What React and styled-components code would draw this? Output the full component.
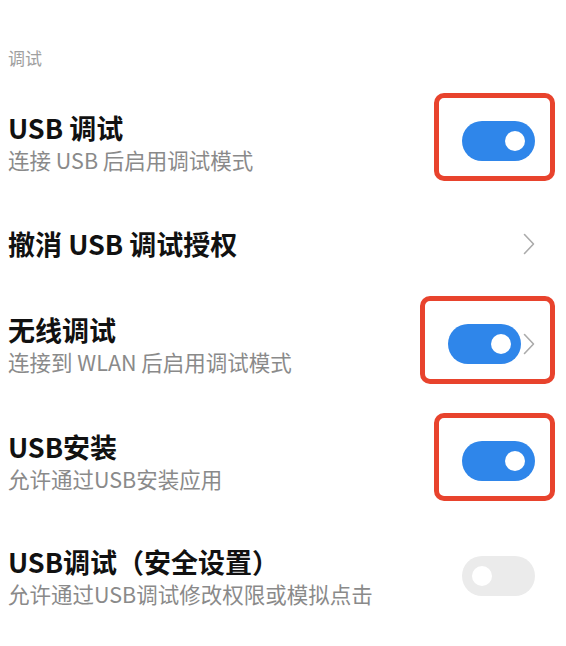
import React from 'react';
import styled, { createGlobalStyle } from 'styled-components';

const GlobalStyle = createGlobalStyle`
  html, body {
    margin: 0;
    padding: 0;
    background: #fff;
  }
  body {
    font-family: "Noto Sans CJK SC", "Noto Sans", sans-serif;
    -webkit-font-smoothing: antialiased;
  }
`;

const Page = styled.div`
  width: 566px;
  height: 646px;
  box-sizing: border-box;
  padding: 46px 31px 0 8px;
  background: #fff;
  overflow: hidden;
`;

const SectionTitle = styled.div`
  font-size: 17px;
  line-height: 24px;
  color: #a0a0a0;
  margin-bottom: 20px;
`;

const Row = styled.div`
  display: flex;
  align-items: center;
  justify-content: space-between;
  height: ${(p) => p.$h}px;
`;

const Texts = styled.div`
  display: flex;
  flex-direction: column;
  padding-top: ${(p) => p.$shift || 0}px;
`;

const Title = styled.div`
  font-size: 27px;
  font-weight: 700;
  line-height: 34px;
  color: #111;
`;

const Sub = styled.div`
  font-size: 21.5px;
  line-height: 30px;
  color: #8a8a8a;
`;

const Controls = styled.div`
  position: relative;
  display: flex;
  align-items: center;
  gap: 2px;
`;

const Highlight = styled.div`
  position: absolute;
  top: -28px;
  bottom: -20px;
  left: -28px;
  right: -20px;
  border: 5px solid #e8432d;
  border-radius: 10px;
  pointer-events: none;
`;

const Track = styled.div`
  width: 73px;
  height: 40px;
  border-radius: 20px;
  background: ${(p) => (p.$on ? '#2f86ea' : '#ebebeb')};
  display: flex;
  align-items: center;
  justify-content: ${(p) => (p.$on ? 'flex-end' : 'flex-start')};
  padding: 0 10px;
  box-sizing: border-box;
`;

const Knob = styled.div`
  width: 20px;
  height: 20px;
  border-radius: 50%;
  background: #fff;
`;

const Chevron = () => (
  <svg width="12" height="22" viewBox="0 0 12 22" fill="none">
    <path d="M1.5 1.5 L10.5 11 L1.5 20.5" stroke="#ababab" strokeWidth="1.6" strokeLinecap="round" strokeLinejoin="round" />
  </svg>
);

const Toggle = ({ on }) => (
  <Track $on={on}>
    <Knob />
  </Track>
);

export default function App() {
  return (
    <>
      <GlobalStyle />
      <Page>
        <SectionTitle>调试</SectionTitle>

        <Row $h={102}>
          <Texts $shift={4}>
            <Title>USB 调试</Title>
            <Sub>连接 USB 后启用调试模式</Sub>
          </Texts>
          <Controls>
            <Toggle on />
            <Highlight />
          </Controls>
        </Row>

        <Row $h={104}>
          <Texts>
            <Title>撤消 USB 调试授权</Title>
          </Texts>
          <Controls>
            <Chevron />
          </Controls>
        </Row>

        <Row $h={96}>
          <Texts $shift={2}>
            <Title>无线调试</Title>
            <Sub>连接到 WLAN 后启用调试模式</Sub>
          </Texts>
          <Controls>
            <Toggle on />
            <Chevron />
            <Highlight />
          </Controls>
        </Row>

        <Row $h={138}>
          <Texts $shift={2}>
            <Title>USB安装</Title>
            <Sub>允许通过USB安装应用</Sub>
          </Texts>
          <Controls>
            <Toggle on />
            <Highlight />
          </Controls>
        </Row>

        <Row $h={92}>
          <Texts $shift={2}>
            <Title>USB调试（安全设置）</Title>
            <Sub>允许通过USB调试修改权限或模拟点击</Sub>
          </Texts>
          <Controls>
            <Toggle />
          </Controls>
        </Row>
      </Page>
    </>
  );
}
